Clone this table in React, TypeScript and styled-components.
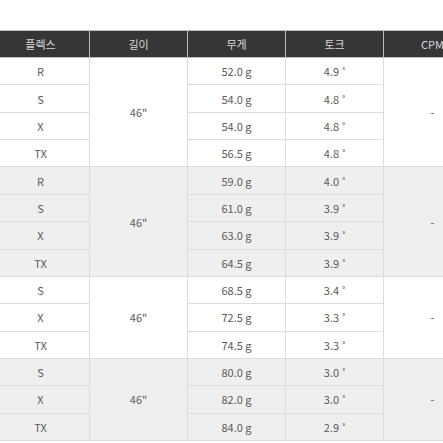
import React from "react";
import styled, { createGlobalStyle } from "styled-components";

const Global = createGlobalStyle`
  html, body { margin: 0; padding: 0; background: #fff; }
  body { font-family: "Noto Sans CJK KR", "Noto Sans", sans-serif; overflow: hidden; }
`;

const Page = styled.div`
  padding-top: 30px;
  width: 443px;
  overflow: hidden;
`;

const Table = styled.table`
  border-collapse: collapse;
  table-layout: fixed;
  width: 490px;
  margin-left: -9px;
`;

const Col = styled.col`
  width: 98px;
`;

const Th = styled.th`
  background: #363636;
  color: #d8d8d8;
  font-weight: 400;
  font-size: 11px;
  height: 26px;
  padding: 0;
  border: 1px solid #bdbdbd;
  text-align: center;
`;

const Td = styled.td<{ $shade: boolean }>`
  background: ${(p) => (p.$shade ? "#efefef" : "#fff")};
  color: #5a5a5a;
  font-size: 11px;
  height: 26.36px;
  padding: 0;
  border: 1px solid #dcdcdc;
  text-align: center;
  vertical-align: middle;
`;

const Deg = styled.span`
  font-size: 10px;
  margin-left: 3px;
`;

type Group = { rows: [string, string, string][] };

const groups: Group[] = [
  { rows: [["R", "52.0 g", "4.9"], ["S", "54.0 g", "4.8"], ["X", "54.0 g", "4.8"], ["TX", "56.5 g", "4.8"]] },
  { rows: [["R", "59.0 g", "4.0"], ["S", "61.0 g", "3.9"], ["X", "63.0 g", "3.9"], ["TX", "64.5 g", "3.9"]] },
  { rows: [["S", "68.5 g", "3.4"], ["X", "72.5 g", "3.3"], ["TX", "74.5 g", "3.3"]] },
  { rows: [["S", "80.0 g", "3.0"], ["X", "82.0 g", "3.0"], ["TX", "84.0 g", "2.9"]] },
];

export default function App() {
  return (
    <Page>
      <Global />
      <Table>
        <colgroup>
          <Col />
          <Col />
          <Col />
          <Col />
          <Col />
        </colgroup>
        <thead>
          <tr>
            <Th>플렉스</Th>
            <Th>길이</Th>
            <Th>무게</Th>
            <Th>토크</Th>
            <Th>CPM</Th>
          </tr>
        </thead>
        <tbody>
          {groups.map((g, gi) =>
            g.rows.map((r, ri) => {
              const shade = gi % 2 === 1;
              return (
                <tr key={`${gi}-${ri}`}>
                  <Td $shade={shade}>{r[0]}</Td>
                  {ri === 0 && (
                    <Td $shade={shade} rowSpan={g.rows.length}>
                      46"
                    </Td>
                  )}
                  <Td $shade={shade}>{r[1]}</Td>
                  <Td $shade={shade}>
                    {r[2]}
                    <Deg>˚</Deg>
                  </Td>
                  {ri === 0 && (
                    <Td $shade={shade} rowSpan={g.rows.length}>
                      -
                    </Td>
                  )}
                </tr>
              );
            })
          )}
        </tbody>
      </Table>
    </Page>
  );
}
